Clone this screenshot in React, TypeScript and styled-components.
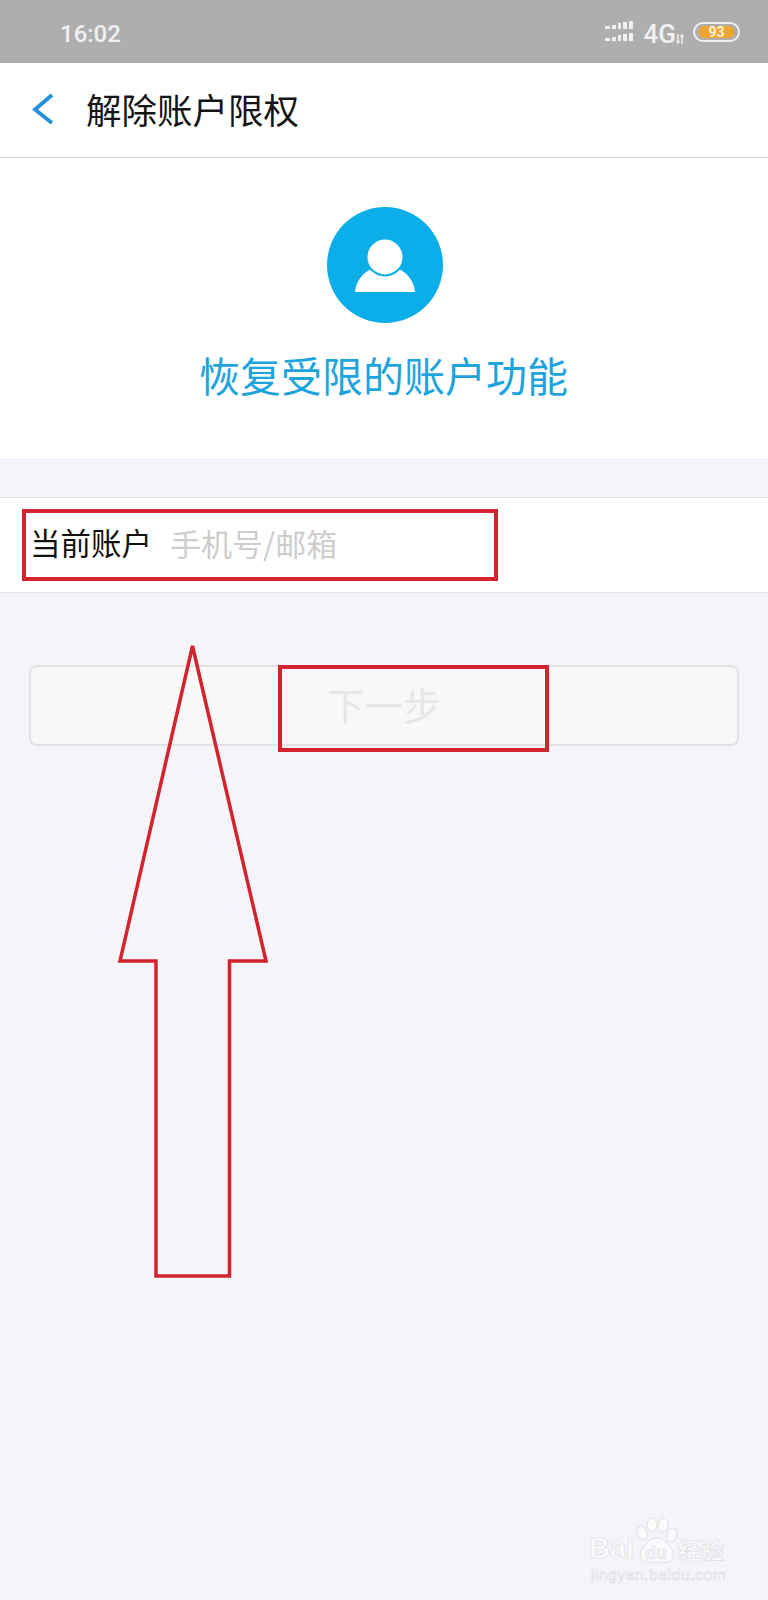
import styled, { createGlobalStyle } from "styled-components";

const cjk = `"Noto Sans CJK SC", "Noto Sans", sans-serif`;

const GlobalStyle = createGlobalStyle`
  html, body {
    margin: 0;
    padding: 0;
    background: #f4f4f9;
  }
  * {
    box-sizing: border-box;
  }
`;

const Page = styled.div`
  position: relative;
  width: 768px;
  height: 1600px;
  overflow: hidden;
  background: #f4f4f9;
  font-family: ${cjk};
`;

const StatusBar = styled.div`
  height: 63px;
  padding: 0 28px 0 60px;
  display: flex;
  align-items: center;
  background: #aeaeae;
  color: #f0f0f0;
`;

const Time = styled.span`
  font-family: Roboto, sans-serif;
  font-size: 24px;
  font-weight: 500;
  line-height: 1;
  margin-top: 4px;
  flex: 1;
`;

const Network = styled.span`
  font-family: Roboto, sans-serif;
  font-size: 26px;
  font-weight: 500;
  line-height: 1;
  margin: 4px 0 0 10px;
`;

const Battery = styled.div`
  width: 47px;
  height: 20px;
  margin-left: 9px;
  padding: 2px 4px;
  border: 2px solid #f0f0f0;
  border-radius: 10px;
  display: flex;
`;

const BatteryLevel = styled.div`
  flex: 1;
  border-radius: 5px;
  background: #eea52f;
  color: #fbf3d8;
  font-family: Roboto, sans-serif;
  font-size: 14px;
  font-weight: 700;
  line-height: 12px;
  text-align: center;
`;

const Header = styled.header`
  height: 95px;
  padding: 0 0 3px 32px;
  display: flex;
  align-items: center;
  gap: 32px;
  background: #fff;
  border-bottom: 1px solid #d2d2d2;
`;

const HeaderTitle = styled.h1`
  margin: 0;
  font-size: 35.5px;
  font-weight: 400;
  line-height: 1;
  color: #151515;
`;

const Hero = styled.section`
  height: 300px;
  padding-top: 49px;
  display: flex;
  flex-direction: column;
  align-items: center;
  background: #fff;
`;

const HeroIcon = styled.svg`
  margin-left: 1px;
`;

const HeroTitle = styled.h2`
  margin: 27px 0 0 -1px;
  font-size: 41px;
  font-weight: 400;
  line-height: 1.2;
  color: #1ea4dc;
`;

const AccountRow = styled.div`
  height: 96px;
  margin-top: 39px;
  padding: 0 0 6px 30px;
  display: flex;
  align-items: center;
  gap: 18px;
  background: #fff;
  border-top: 1px solid #e3e3e6;
  border-bottom: 1px solid #e3e3e6;
`;

const AccountLabel = styled.label`
  font-size: 30.5px;
  line-height: 1;
  color: #111;
  white-space: nowrap;
`;

const AccountInput = styled.input`
  flex: 1;
  padding: 0;
  border: none;
  outline: none;
  background: transparent;
  font-family: ${cjk};
  font-size: 31px;
  font-weight: 400;
  &::placeholder {
    color: #cdcdcd;
    opacity: 1;
  }
`;

const NextButton = styled.button`
  display: block;
  width: 710px;
  height: 81px;
  margin: 72px 0 0 29px;
  padding: 0 0 4px;
  border: 2px solid #e2e2e4;
  border-radius: 8px;
  background: #f8f8f9;
  color: #e6e6e6;
  font-family: ${cjk};
  font-size: 38px;
  font-weight: 400;
`;

const Annotation = styled.div<{ $left: number; $top: number; $width: number; $height: number }>`
  position: absolute;
  left: ${({ $left }) => $left}px;
  top: ${({ $top }) => $top}px;
  width: ${({ $width }) => $width}px;
  height: ${({ $height }) => $height}px;
  border: 4px solid #d2232f;
`;

const ArrowOverlay = styled.svg`
  position: absolute;
  left: 0;
  top: 0;
`;

const Watermark = styled.div`
  position: absolute;
  left: 589px;
  top: 1514px;
  width: 140px;
  height: 72px;
  color: #fbfbfd;
  -webkit-text-stroke: 0.7px #dedee2;
`;

const WatermarkBrand = styled.span`
  position: absolute;
  left: 0;
  top: 19px;
  font-family: "Liberation Sans", sans-serif;
  font-size: 29px;
  font-weight: 700;
  line-height: 30px;
`;

const PawSvg = styled.svg`
  position: absolute;
  left: 46px;
  top: 2px;
`;

const WatermarkDu = styled.span`
  position: absolute;
  left: 56px;
  top: 30px;
  font-family: "Liberation Sans", sans-serif;
  font-size: 18px;
  font-weight: 700;
  line-height: 18px;
  color: #f4f4f9;
`;

const WatermarkCn = styled.span`
  position: absolute;
  left: 89px;
  top: 22px;
  font-size: 23px;
  font-weight: 700;
  line-height: 26px;
  white-space: nowrap;
`;

const WatermarkUrl = styled.span`
  position: absolute;
  left: 2px;
  top: 52px;
  font-family: "Liberation Sans", sans-serif;
  font-size: 15.5px;
  line-height: 18px;
  letter-spacing: 0.6px;
  white-space: nowrap;
`;

const SignalIcon = () => (
  <svg width="29" height="21" viewBox="0 0 29 21" fill="#f0f0f0">
    <rect x="0" y="5" width="5" height="3" />
    <rect x="7" y="4" width="4" height="4" />
    <rect x="13" y="2" width="3" height="6" />
    <rect x="18" y="1" width="4" height="7" />
    <rect x="24" y="0" width="4" height="8" />
    <rect x="0" y="17" width="5" height="3" />
    <rect x="7" y="16" width="4" height="4" />
    <rect x="13" y="14" width="3" height="6" />
    <rect x="18" y="13" width="4" height="7" />
    <rect x="24" y="12" width="4" height="8" />
  </svg>
);

const TransferIcon = () => (
  <svg width="8" height="10" viewBox="0 0 8 10" fill="none" stroke="#f0f0f0" strokeWidth="1.4" style={{ marginTop: 14 }}>
    <path d="M2 0v9M0.500 7l1.500 2 1.500-2M6 10V1M4.500 3L6 1l1.500 2" />
  </svg>
);

const BackIcon = () => (
  <svg width="22" height="32" viewBox="0 0 22 32" fill="none">
    <path d="M20 2L3 16.500L20 30" stroke="#2190d8" strokeWidth="3.800" />
  </svg>
);

const AvatarIcon = () => (
  <HeroIcon width="116" height="116" viewBox="0 0 116 116">
    <circle cx="58" cy="58" r="58" fill="#0caeea" />
    <path d="M28 85C29 74 36 65 46 61.500H70C80 65 87 74 88 85Z" fill="#fff" />
    <circle cx="58" cy="50" r="18.500" fill="#fff" stroke="#0caeea" strokeWidth="2" />
  </HeroIcon>
);

const PawIcon = () => (
  <PawSvg width="44" height="50" viewBox="0 0 44 50" fill="#fbfbfd" stroke="#dedee2" strokeWidth="1">
    <ellipse cx="7" cy="17" rx="5" ry="7" transform="rotate(-15 7 17)" />
    <ellipse cx="17" cy="9" rx="5" ry="7" />
    <ellipse cx="28" cy="9" rx="5" ry="7" />
    <ellipse cx="37" cy="19" rx="5" ry="7" transform="rotate(15 37 19)" />
    <path d="M22 22C29 22 32 27 36 32C41 38 38 46 31 46C27 46 18 46 13 46C6 46 3 38 8 32C12 27 15 22 22 22Z" />
  </PawSvg>
);

function App() {
  return (
    <Page>
      <GlobalStyle />
      <StatusBar>
        <Time>16:02</Time>
        <SignalIcon />
        <Network>4G</Network>
        <TransferIcon />
        <Battery>
          <BatteryLevel>93</BatteryLevel>
        </Battery>
      </StatusBar>
      <Header>
        <BackIcon />
        <HeaderTitle>解除账户限权</HeaderTitle>
      </Header>
      <Hero>
        <AvatarIcon />
        <HeroTitle>恢复受限的账户功能</HeroTitle>
      </Hero>
      <AccountRow>
        <AccountLabel>当前账户</AccountLabel>
        <AccountInput placeholder="手机号/邮箱" />
      </AccountRow>
      <NextButton disabled>下一步</NextButton>

      <Annotation $left={22} $top={509} $width={476} $height={72} />
      <Annotation $left={278} $top={665} $width={271} $height={87} />
      <ArrowOverlay width="768" height="1600">
        <path
          d="M192.500 646L266 961H229.500V1276H156V961H120Z"
          fill="none"
          stroke="#d2232f"
          strokeWidth="3.500"
        />
      </ArrowOverlay>

      <Watermark>
        <WatermarkBrand>Bai</WatermarkBrand>
        <PawIcon />
        <WatermarkDu>du</WatermarkDu>
        <WatermarkCn>经验</WatermarkCn>
        <WatermarkUrl>jingyan.baidu.com</WatermarkUrl>
      </Watermark>
    </Page>
  );
}

export default App;
